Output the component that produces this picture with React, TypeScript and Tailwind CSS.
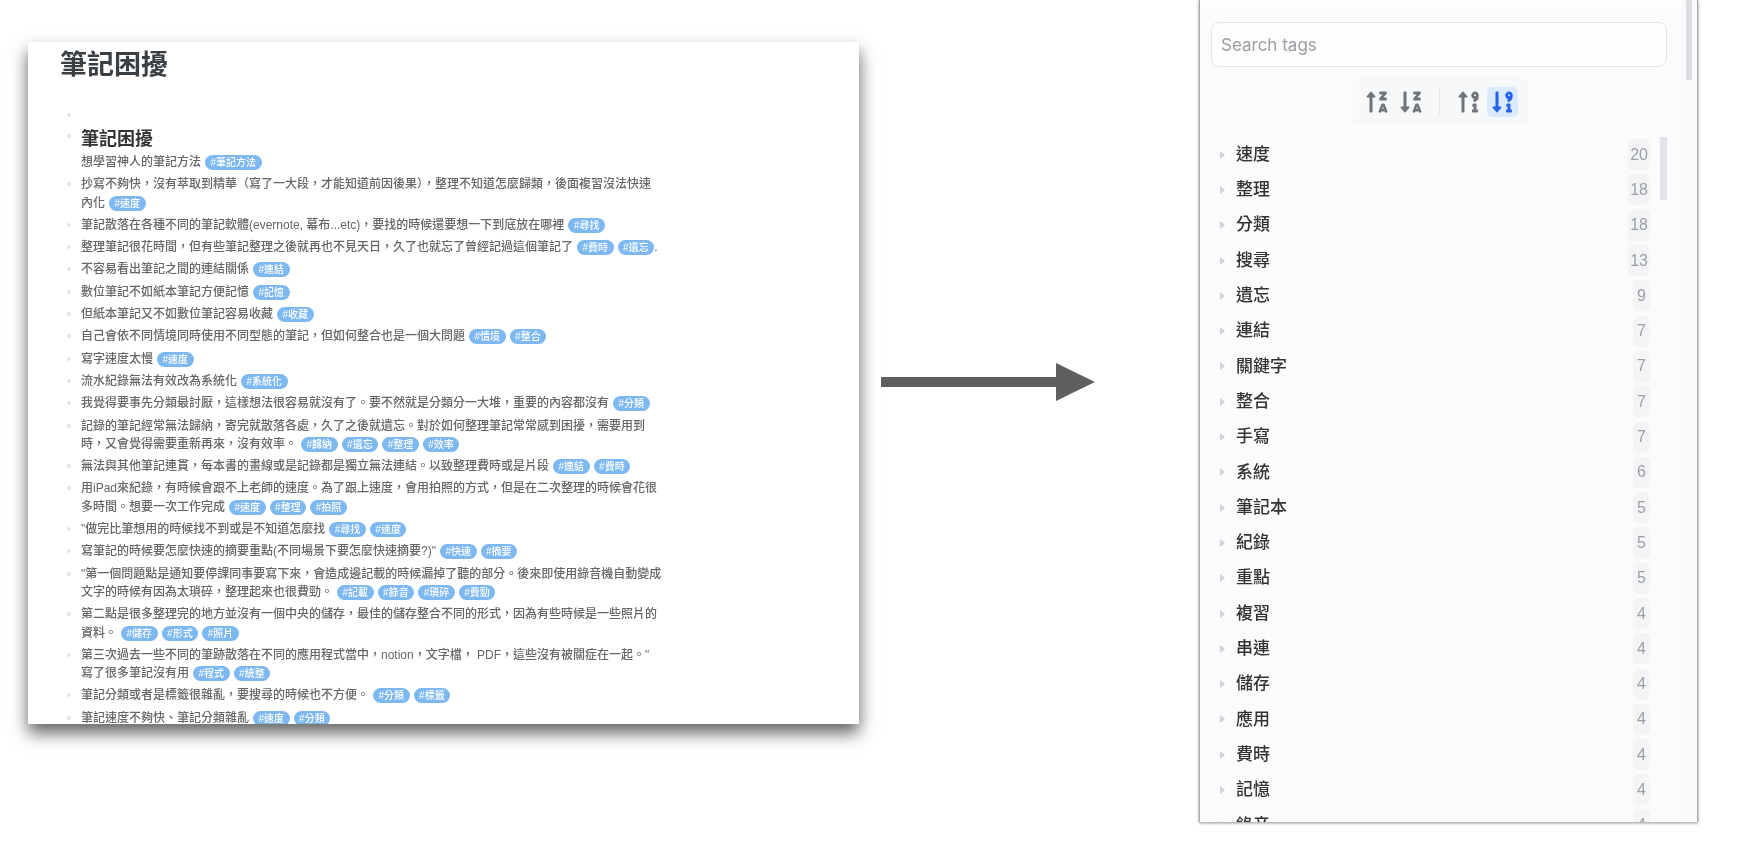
import {FaSortAlphaDownAlt, FaSortAlphaUpAlt, FaSortNumericDownAlt, FaSortNumericUpAlt} from 'react-icons/fa';

type Note = {text: string; tags: string[]; tail?: string};

const NOTES: Note[] = [
  {text: '抄寫不夠快，沒有萃取到精華（寫了一大段，才能知道前因後果），整理不知道怎麼歸類，後面複習沒法快速\n內化', tags: ['速度']},
  {text: '筆記散落在各種不同的筆記軟體(evernote, 幕布...etc)，要找的時候還要想一下到底放在哪裡', tags: ['尋找']},
  {text: '整理筆記很花時間，但有些筆記整理之後就再也不見天日，久了也就忘了曾經記過這個筆記了', tags: ['費時', '遺忘'], tail: '.'},
  {text: '不容易看出筆記之間的連結關係', tags: ['連結']},
  {text: '數位筆記不如紙本筆記方便記憶', tags: ['記憶']},
  {text: '但紙本筆記又不如數位筆記容易收藏', tags: ['收藏']},
  {text: '自己會依不同情境同時使用不同型態的筆記，但如何整合也是一個大問題', tags: ['情境', '整合']},
  {text: '寫字速度太慢', tags: ['速度']},
  {text: '流水紀錄無法有效改為系統化', tags: ['系統化']},
  {text: '我覺得要事先分類最討厭，這樣想法很容易就沒有了。要不然就是分類分一大堆，重要的內容都沒有', tags: ['分類']},
  {text: '記錄的筆記經常無法歸納，寄完就散落各處，久了之後就遺忘。對於如何整理筆記常常感到困擾，需要用到\n時，又會覺得需要重新再來，沒有效率。', tags: ['歸納', '遺忘', '整理', '效率']},
  {text: '無法與其他筆記連貫，每本書的畫線或是記錄都是獨立無法連結。以致整理費時或是片段', tags: ['連結', '費時']},
  {text: '用iPad來紀錄，有時候會跟不上老師的速度。為了跟上速度，會用拍照的方式，但是在二次整理的時候會花很\n多時間。想要一次工作完成', tags: ['速度', '整理', '拍照']},
  {text: '"做完比筆想用的時候找不到或是不知道怎麼找', tags: ['尋找', '速度']},
  {text: '寫筆記的時候要怎麼快速的摘要重點(不同場景下要怎麼快速摘要?)"', tags: ['快速', '摘要']},
  {text: '"第一個問題點是通知要停課同事要寫下來，會造成邊記載的時候漏掉了聽的部分。後來即使用錄音機自動變成\n文字的時候有因為太瑣碎，整理起來也很費勁。', tags: ['記載', '錄音', '瑣碎', '費勁']},
  {text: '第二點是很多整理完的地方並沒有一個中央的儲存，最佳的儲存整合不同的形式，因為有些時候是一些照片的\n資料。', tags: ['儲存', '形式', '照片']},
  {text: '第三次過去一些不同的筆跡散落在不同的應用程式當中，notion，文字檔， PDF，這些沒有被關症在一起。"\n寫了很多筆記沒有用', tags: ['程式', '統整']},
  {text: '筆記分類或者是標籤很雜亂，要搜尋的時候也不方便。', tags: ['分類', '標籤']},
  {text: '筆記速度不夠快、筆記分類雜亂', tags: ['速度', '分類']},
];

const TAG_COUNTS: [string, number][] = [
  ['速度', 20], ['整理', 18], ['分類', 18], ['搜尋', 13], ['遺忘', 9], ['連結', 7], ['關鍵字', 7],
  ['整合', 7], ['手寫', 7], ['系統', 6], ['筆記本', 5], ['紀錄', 5], ['重點', 5], ['複習', 4],
  ['串連', 4], ['儲存', 4], ['應用', 4], ['費時', 4], ['記憶', 4], ['錄音', 4],
];

const Tag = ({name}: {name: string}) => (
  <span className="mt-[2px] ml-[4px] inline-block h-[15px] rounded-full bg-[#7db8f0] px-[5.5px] align-top text-[10px] leading-[15px] text-white">
    #{name}
  </span>
);

const Bullet = () => <span className="absolute top-[7px] -left-[14px] size-[4px] rounded-full bg-[#e6e6e6]" />;

const NotesCard = () => (
  <div className="mt-[42px] ml-[28px] h-[682px] w-[831px] shrink-0 overflow-hidden bg-white pl-[32px] shadow-[0_9px_16px_rgba(0,0,0,0.62)] blur-[0.4px]">
    <h1 className="mt-[5px] text-[27px] leading-[36px] font-bold text-[#3a3f44]">筆記困擾</h1>
    <div className="relative mt-[23px] ml-[21px] h-[12px]">
      <Bullet />
    </div>
    <ul className="mt-[6px] ml-[21px] flex flex-col gap-[4px] text-[12px] leading-[18.3px] font-medium whitespace-pre text-[#666666]">
      <li className="relative">
        <span className="absolute top-[10px] -left-[14px] size-[4px] rounded-full bg-[#e6e6e6]" />
        <h2 className="mb-[3px] pt-[4px] text-[18px] leading-[22px] font-bold text-[#333333]">筆記困擾</h2>
        <div>
          想學習神人的筆記方法
          <Tag name="筆記方法" />
        </div>
      </li>
      {NOTES.map(note => (
        <li key={note.text} className="relative">
          <Bullet />
          {note.text}
          {note.tags.map(tag => (
            <Tag key={tag} name={tag} />
          ))}
          {note.tail}
        </li>
      ))}
    </ul>
  </div>
);

const Arrow = () => (
  <svg className="mt-[363px] ml-[22px] shrink-0" width="214" height="38" viewBox="0 0 214 38">
    <rect x="0" y="14" width="176" height="10" fill="#5f5f5f" />
    <polygon points="175,0 214,19 175,38" fill="#5f5f5f" />
  </svg>
);

const SortButton = ({active, children}: {active?: boolean; children: React.ReactNode}) => (
  <div
    className={
      active
        ? 'flex h-[30px] w-[31px] items-center justify-center rounded-[5px] bg-[#dbeafe] text-[#2563eb]'
        : 'flex h-[30px] w-[31px] items-center justify-center rounded-[5px] text-[#6f7479]'
    }
  >
    {children}
  </div>
);

const TagRow = ({name, count}: {name: string; count: number}) => (
  <div className="flex h-[35.3px] shrink-0 items-center pl-[9px]">
    <span className="h-0 w-0 border-y-[4.5px] border-l-[5px] border-y-transparent border-l-[#cfd1d4]" />
    <span className="ml-[11px] text-[17px] font-medium text-[#333333]">{name}</span>
    <span className="ml-auto flex h-[31px] min-w-[17px] items-center justify-center rounded-[5px] bg-[#f3f4f6] px-[2px] text-[16px] text-[#9c9fa3]">
      {count}
    </span>
  </div>
);

const TagPanel = () => (
  <div className="ml-[104px] flex h-[822px] w-[499px] shrink-0 flex-col border-x border-[#a9a9a9] bg-white shadow-[0_1px_3px_rgba(0,0,0,0.45)] blur-[0.3px]">
    <div className="flex min-h-0 flex-1">
      <div className="flex w-[481px] min-w-0 flex-col">
        <div className="h-[7px] shrink-0 bg-white" />
        <div className="flex min-h-0 flex-1 flex-col bg-[#fafbfd] pt-[15px] pr-[14px] pl-[11px]">
          <div className="flex h-[45px] shrink-0 items-center rounded-[8px] border border-[#e3e5e8] bg-[#fdfdfe] px-[9px] pt-[2px] font-['Inter'] text-[17px] text-[#9a9da1]">
            Search tags
          </div>
          <div className="mt-[11px] ml-[3px] flex h-[47px] w-[175px] shrink-0 items-center self-center rounded-[6px] bg-[#f6f8fa] pl-[8px]">
            <div className="flex gap-[3px]">
              <SortButton>
                <FaSortAlphaUpAlt size={24} />
              </SortButton>
              <SortButton>
                <FaSortAlphaDownAlt size={24} />
              </SortButton>
            </div>
            <span className="mx-[13px] h-[29px] w-px bg-[#e8eaed]" />
            <div className="flex gap-[3px]">
              <SortButton>
                <FaSortNumericUpAlt size={24} />
              </SortButton>
              <SortButton active>
                <FaSortNumericDownAlt size={24} />
              </SortButton>
            </div>
          </div>
          <div className="relative mt-[12px] flex min-h-0 flex-1 flex-col overflow-hidden pr-[17px]">
            {TAG_COUNTS.map(([name, count]) => (
              <TagRow key={name} name={name} count={count} />
            ))}
            <span className="absolute top-0 right-0 h-[63px] w-[7px] bg-[#e2e4ea]" />
          </div>
        </div>
      </div>
      <div className="flex flex-1 justify-center bg-[#f9fafb]">
        <div className="h-[80px] w-[6px] bg-[#dcdde0]" />
      </div>
    </div>
  </div>
);

const App = () => (
  <div className="flex h-[847px] w-[1737px] items-start overflow-hidden bg-white font-['Liberation_Sans','Noto_Sans_CJK_TC',sans-serif]">
    <NotesCard />
    <Arrow />
    <TagPanel />
  </div>
);

export default App;
